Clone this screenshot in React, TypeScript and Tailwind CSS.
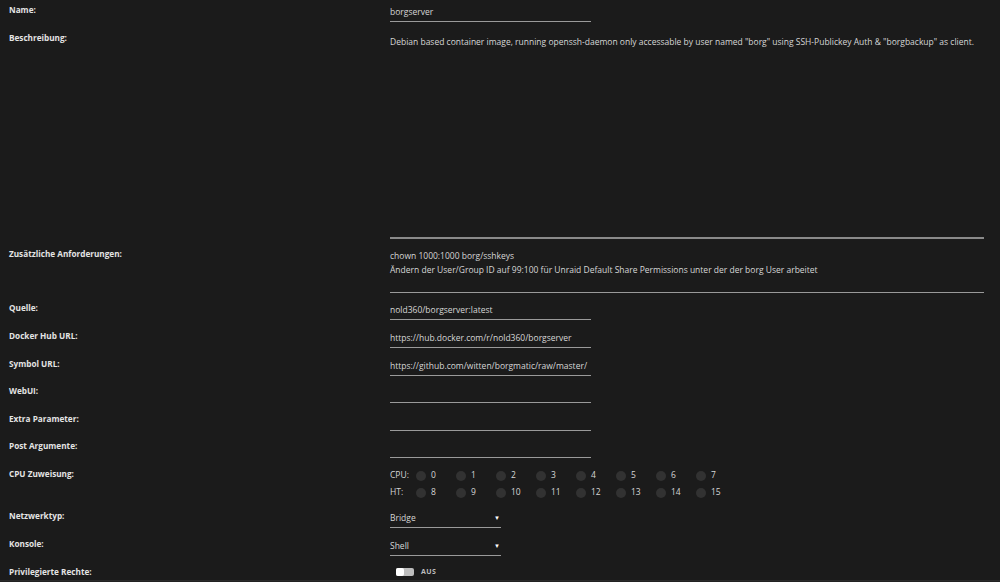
import React from 'react';

const font = { fontFamily: '"Open Sans", "Noto Sans", sans-serif' };

const Label = ({ children }: { children: React.ReactNode }) => (
  <div className="w-[390px] shrink-0 pl-[9px] text-[8.2px] font-bold leading-[13px] text-[#e4e4e4]">
    {children}
  </div>
);

const TextInput = ({ value }: { value?: string }) => (
  <div className="flex h-[19px] w-[201px] items-center border-b border-[#9a9a9a] text-[8.5px] text-[#d6d6d6]">
    {value}
  </div>
);

const Select = ({ value }: { value: string }) => (
  <div className="flex h-[19px] w-[111px] items-center justify-between border-b border-[#9a9a9a] pr-[1px] text-[8.5px] text-[#d6d6d6]">
    <span>{value}</span>
    <span className="text-[6px] text-white">▼</span>
  </div>
);

const CpuRow = ({ label, nums }: { label: string; nums: number[] }) => (
  <div className="flex h-[17px] items-center text-[8.5px] text-[#d6d6d6]">
    <span className="w-[26px]">{label}</span>
    {nums.map((n) => (
      <div key={n} className="flex w-[40px] items-center">
        <span className="h-[10px] w-[10px] rounded-full bg-[#323232]" />
        <span className="ml-[5px]">{n}</span>
      </div>
    ))}
  </div>
);

export default function App() {
  return (
    <div style={font} className="flex h-[582px] w-[1000px] flex-col overflow-hidden bg-[#1b1b1b]">
      <div className="flex flex-col pt-[3px]">
        <div className="flex h-[28px]">
          <Label>Name:</Label>
          <TextInput value="borgserver" />
        </div>

        <div className="flex h-[216px]">
          <Label>Beschreibung:</Label>
          <div className="h-[208px] w-[594px] border-b-2 border-[#8a8a8a] pt-[4px] text-[8.5px] leading-[13px] text-[#d6d6d6]">
            Debian based container image, running openssh-daemon only accessable by user named "borg" using SSH-Publickey Auth &amp; "borgbackup" as client.
          </div>
        </div>

        <div className="flex h-[54px]">
          <Label>Zusätzliche Anforderungen:</Label>
          <div className="h-[46px] w-[594px] border-b border-[#9a9a9a] pt-[2px] text-[8.5px] leading-[14px] text-[#d6d6d6]">
            <div>chown 1000:1000 borg/sshkeys</div>
            <div>Ändern der User/Group ID auf 99:100 für Unraid Default Share Permissions unter der der borg User arbeitet</div>
          </div>
        </div>

        <div className="flex h-[28px]">
          <Label>Quelle:</Label>
          <TextInput value="nold360/borgserver:latest" />
        </div>
        <div className="flex h-[28px]">
          <Label>Docker Hub URL:</Label>
          <TextInput value="https://hub.docker.com/r/nold360/borgserver" />
        </div>
        <div className="flex h-[27px]">
          <Label>Symbol URL:</Label>
          <TextInput value="https://github.com/witten/borgmatic/raw/master/" />
        </div>
        <div className="flex h-[28px]">
          <Label>WebUI:</Label>
          <TextInput />
        </div>
        <div className="flex h-[27px]">
          <Label>Extra Parameter:</Label>
          <TextInput />
        </div>
        <div className="flex h-[28px]">
          <Label>Post Argumente:</Label>
          <TextInput />
        </div>

        <div className="flex h-[42px]">
          <Label>CPU Zuweisung:</Label>
          <div className="flex flex-col">
            <CpuRow label="CPU:" nums={[0, 1, 2, 3, 4, 5, 6, 7]} />
            <CpuRow label="HT:" nums={[8, 9, 10, 11, 12, 13, 14, 15]} />
          </div>
        </div>

        <div className="flex h-[28px]">
          <Label>Netzwerktyp:</Label>
          <Select value="Bridge" />
        </div>
        <div className="flex h-[28px]">
          <Label>Konsole:</Label>
          <Select value="Shell" />
        </div>
        <div className="flex h-[14px]">
          <Label>Privilegierte Rechte:</Label>
          <div className="flex items-center pl-[6px]">
            <span className="flex h-[8px] w-[18px] items-center rounded-[2px] bg-[#bdbdbd]">
              <span className="h-[8px] w-[8px] rounded-[2px] bg-white" />
            </span>
            <span className="ml-[7px] text-[7px] font-bold tracking-[0.5px] text-[#bdbdbd]">AUS</span>
          </div>
        </div>
      </div>
      <div className="mt-[1px] flex-1 border-t border-[#2a2a2a] bg-[#222222]" />
    </div>
  );
}
